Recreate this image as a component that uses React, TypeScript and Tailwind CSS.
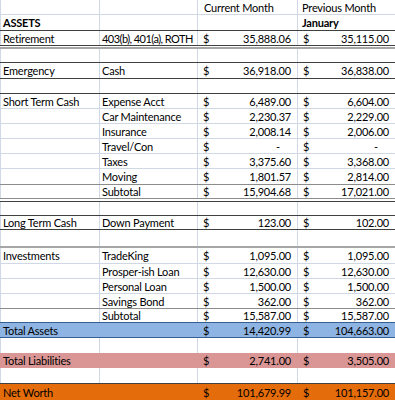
import React from "react";

type RowProps = {
  h: string;
  a?: string;
  b?: string;
  c?: string;
  d?: string;
  fill?: string;
  grid?: boolean;
  boldA?: boolean;
  boldD?: boolean;
  header?: boolean;
  bClass?: string;
};

function Cell({
  w,
  grid,
  children,
  className,
}: {
  w: string;
  grid: boolean;
  children?: React.ReactNode;
  className?: string;
}) {
  return (
    <div
      className={
        w +
        " h-full flex items-center whitespace-nowrap overflow-hidden border-l " +
        (grid ? "border-[#d0d7e5] " : "border-transparent ") +
        (className || "")
      }
    >
      {children}
    </div>
  );
}

function Money({ v, dash }: { v?: string; dash?: boolean }) {
  if (v === undefined) return null;
  return (
    <div className="flex w-full items-center justify-between">
      <span className="pl-[5px]">$</span>
      <span className={dash ? "pr-[17px]" : "pr-[6px]"}>{v}</span>
    </div>
  );
}

function Row({ h, a, b, c, d, fill, grid = true, boldA, boldD, header, bClass }: RowProps) {
  return (
    <div className={"flex w-full " + h + " " + (fill || "")}>
      <Cell w="w-[99px] shrink-0" grid={grid} className={"pl-[2px] " + (boldA ? "font-bold" : "")}>
        {a}
      </Cell>
      <Cell w="w-[98px] shrink-0" grid={grid} className={"pl-[2px] " + (bClass || "")}>
        {b}
      </Cell>
      <Cell w="w-[100px] shrink-0" grid={grid}>
        {header ? <span className="pl-[6px]">{c}</span> : <Money v={c} dash={c === "-"} />}
      </Cell>
      <Cell w="flex-1" grid={grid} className={boldD ? "font-bold" : ""}>
        {header || boldD ? <span className="pl-[4px]">{d}</span> : <Money v={d} dash={d === "-"} />}
      </Cell>
    </div>
  );
}

const Dark = () => <div className="h-px w-full bg-[#404040]" />;
const Grid = () => <div className="h-px w-full bg-[#d0d7e5]" />;
const Gray2 = () => <div className="h-[2px] w-full bg-[#a6a6a6]" />;
const Gray1 = () => <div className="h-px w-full bg-[#8c8c8c]" />;
const White = ({ h }: { h: string }) => <div className={"w-full bg-white " + h} />;
const Blue = () => <div className="h-px w-full bg-[#366092]" />;

export default function App() {
  return (
    <div
      className="w-[395px] h-[400px] overflow-hidden bg-white text-[11px] leading-none tracking-[-0.2px] text-black"
      style={{ fontFamily: "Lato, 'Liberation Sans', sans-serif" }}
    >
      <Row h="h-[14px]" c="Current Month" d="Previous Month" header />
      <Grid />
      <Row h="h-[15px]" a="ASSETS" boldA d="January" boldD header />
      <Dark />
      <Row
        h="h-[14px]"
        a="Retirement"
        b="403(b), 401(a), ROTH"
        bClass="tracking-[-0.55px]"
        c="35,888.06"
        d="35,115.00"
      />
      <Dark />
      <White h="h-px" />
      <Gray2 />
      <Row h="h-[13px]" />
      <Dark />
      <Row h="h-[15px]" a="Emergency" b="Cash" c="36,918.00" d="36,838.00" />
      <Dark />
      <Row h="h-[14px]" />
      <Dark />
      <Row h="h-[14px]" a="Short Term Cash" b="Expense Acct" c="6,489.00" d="6,604.00" />
      <Grid />
      <Row h="h-[14px]" b="Car Maintenance" c="2,230.37" d="2,229.00" />
      <Grid />
      <Row h="h-[14px]" b="Insurance" c="2,008.14" d="2,006.00" />
      <Grid />
      <Row h="h-[14px]" b="Travel/Con" c="-" d="-" />
      <Grid />
      <Row h="h-[14px]" b="Taxes" c="3,375.60" d="3,368.00" />
      <Grid />
      <Row h="h-[15px]" b="Moving" c="1,801.57" d="2,814.00" />
      <Gray1 />
      <Row h="h-[13px]" b="Subtotal" c="15,904.68" d="17,021.00" />
      <Gray1 />
      <White h="h-[2px]" />
      <Dark />
      <Row h="h-[13px]" />
      <Dark />
      <Row h="h-[13px]" a="Long Term Cash" b="Down Payment" c="123.00" d="102.00" />
      <Dark />
      <Row h="h-[16px]" />
      <Gray2 />
      <Row h="h-[15px]" a="Investments" b="TradeKing" c="1,095.00" d="1,095.00" />
      <Grid />
      <Row h="h-[14px]" b="Prosper-ish Loan" c="12,630.00" d="12,630.00" />
      <Grid />
      <Row h="h-[14px]" b="Personal Loan" c="1,500.00" d="1,500.00" />
      <Grid />
      <Row h="h-[14px]" b="Savings Bond" c="362.00" d="362.00" />
      <Gray1 />
      <Row h="h-[13px]" b="Subtotal" c="15,587.00" d="15,587.00" />
      <Blue />
      <Row h="h-[14px]" a="Total Assets" c="14,420.99" d="104,663.00" fill="bg-[#8db4e2]" grid={false} />
      <Blue />
      <Row h="h-[15px]" />
      <Row h="h-[15px]" a="Total Liabilities" c="2,741.00" d="3,505.00" fill="bg-[#da9694]" grid={false} />
      <Row h="h-[15px]" />
      <Dark />
      <Row h="h-[16px]" a="Net Worth" c="101,679.99" d="101,157.00" fill="bg-[#e46c0a]" grid={false} />
    </div>
  );
}
